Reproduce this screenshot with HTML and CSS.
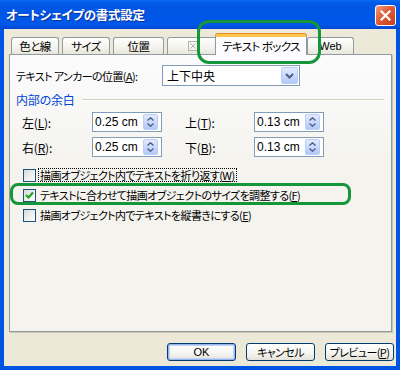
FILE: index.html
```html
<!DOCTYPE html>
<html>
<head>
  <meta charset="UTF-8">
  <link rel="stylesheet" href="styles.css">
</head>
<body>
  <div class="window">
    <div class="titlebar">
      <span class="title">オートシェイプの書式設定</span>
      <span class="close">
        <svg width="11" height="11" viewBox="0 0 11 11"><path d="M1.5 1.5 L9.5 9.5 M9.5 1.5 L1.5 9.5" stroke="#fff" stroke-width="2.2" stroke-linecap="square"/></svg>
      </span>
    </div>

    <div class="client">
      <div class="tabs">
        <div class="tab w1">色と線</div>
        <div class="tab w2">サイズ</div>
        <div class="tab w3">位置</div>
        <div class="tab w4">
          <svg width="10" height="10" viewBox="0 0 10 10"><rect x="0.5" y="0.5" width="9" height="9" fill="#f4f3ee" stroke="#b5b3a8"/><path d="M2.5 2.5 L7.5 7.5 M7.5 2.5 L2.5 7.5" stroke="#b5b3a8"/></svg>
        </div>
        <div class="tab sel">テキスト ボックス</div>
        <div class="tab w6">Web</div>
      </div>

      <div class="panel">
        <div class="anchor">
          <span class="anchor-label">テキスト アンカーの位置(<u>A</u>):</span>
          <div class="select">
            <span class="select-text">上下中央</span>
            <span class="drop">
              <svg width="9" height="6" viewBox="0 0 9 6"><path d="M1 1 L4.5 4.5 L8 1" fill="none" stroke="#4d6185" stroke-width="2"/></svg>
            </span>
          </div>
        </div>

        <div class="group">
          <span class="group-label">内部の余白</span>
          <span class="rule"></span>
        </div>

        <div class="margins">
          <div class="mrow">
            <span class="mlabel">左(<u>L</u>):</span>
            <div class="spin"><span class="val">0.25 cm</span><span class="arrows"><svg width="7" height="4" viewBox="0 0 7 4"><path d="M0.5 3.5 L3.5 0.8 L6.5 3.5" fill="none" stroke="#4d6185" stroke-width="1.4"/></svg><svg width="7" height="4" viewBox="0 0 7 4"><path d="M0.5 0.5 L3.5 3.2 L6.5 0.5" fill="none" stroke="#4d6185" stroke-width="1.4"/></svg></span></div>
            <span class="mlabel second">上(<u>T</u>):</span>
            <div class="spin"><span class="val">0.13 cm</span><span class="arrows"><svg width="7" height="4" viewBox="0 0 7 4"><path d="M0.5 3.5 L3.5 0.8 L6.5 3.5" fill="none" stroke="#4d6185" stroke-width="1.4"/></svg><svg width="7" height="4" viewBox="0 0 7 4"><path d="M0.5 0.5 L3.5 3.2 L6.5 0.5" fill="none" stroke="#4d6185" stroke-width="1.4"/></svg></span></div>
          </div>
          <div class="mrow">
            <span class="mlabel">右(<u>R</u>):</span>
            <div class="spin"><span class="val">0.25 cm</span><span class="arrows"><svg width="7" height="4" viewBox="0 0 7 4"><path d="M0.5 3.5 L3.5 0.8 L6.5 3.5" fill="none" stroke="#4d6185" stroke-width="1.4"/></svg><svg width="7" height="4" viewBox="0 0 7 4"><path d="M0.5 0.5 L3.5 3.2 L6.5 0.5" fill="none" stroke="#4d6185" stroke-width="1.4"/></svg></span></div>
            <span class="mlabel second">下(<u>B</u>):</span>
            <div class="spin"><span class="val">0.13 cm</span><span class="arrows"><svg width="7" height="4" viewBox="0 0 7 4"><path d="M0.5 3.5 L3.5 0.8 L6.5 3.5" fill="none" stroke="#4d6185" stroke-width="1.4"/></svg><svg width="7" height="4" viewBox="0 0 7 4"><path d="M0.5 0.5 L3.5 3.2 L6.5 0.5" fill="none" stroke="#4d6185" stroke-width="1.4"/></svg></span></div>
          </div>
        </div>

        <div class="checks">
          <div class="check">
            <span class="box"></span>
            <span class="ctext focus">描画オブジェクト内でテキストを折り返す(<u>W</u>)</span>
          </div>
          <div class="check">
            <span class="box"><svg width="9" height="9" viewBox="0 0 9 9"><path d="M1 4 L3.5 6.5 L8 1.5" fill="none" stroke="#21a121" stroke-width="2.2"/></svg></span>
            <span class="ctext">テキストに合わせて描画オブジェクトのサイズを調整する(<u>F</u>)</span>
          </div>
          <div class="check">
            <span class="box"></span>
            <span class="ctext">描画オブジェクト内でテキストを縦書きにする(<u>E</u>)</span>
          </div>
        </div>
      </div>

      <div class="buttons">
        <span class="btn default">OK</span>
        <span class="btn">キャンセル</span>
        <span class="btn">プレビュー(<u>P</u>)</span>
      </div>
    </div>

    <!-- green annotation marks -->
    <div class="mark mark-tab"></div>
    <div class="mark mark-check"></div>
  </div>
</body>
</html>
```

FILE: styles.css
```css
body {
  margin: 0;
}
.window {
  position: relative;
  width: 400px;
  height: 370px;
  display: flex;
  flex-direction: column;
  font-family: "Noto Sans CJK JP", sans-serif;
  font-size: 11px;
  letter-spacing: -0.6px;
  font-feature-settings: "palt";
  color: #000;
  white-space: nowrap;
}
.titlebar {
  height: 29px;
  flex: none;
  display: flex;
  align-items: center;
  padding: 0 4px 0 6px;
  background: linear-gradient(#0a6af0 0%, #0259e6 12%, #0055e4 50%, #0058ea 85%, #0046d0 100%);
}
.title {
  flex: 1;
  color: #fff;
  font-weight: bold;
  font-size: 12.5px;
  letter-spacing: -0.3px;
  text-shadow: 1px 1px #0b2f9a;
}
.close {
  width: 19px;
  height: 19px;
  margin-top: 2px;
  display: flex;
  align-items: center;
  justify-content: center;
  border: 1px solid #fff;
  border-radius: 3px;
  background: linear-gradient(135deg, #f0a088 0%, #e2603a 40%, #c83c18 100%);
}
.client {
  flex: 1;
  display: flex;
  flex-direction: column;
  background: #ece9d8;
  border: 4px solid #0055e5;
  border-top: 0;
  padding: 5px 4px 0 5px;
}
.tabs {
  height: 20px;
  display: flex;
  align-items: flex-end;
  padding-left: 2px;
  position: relative;
  z-index: 2;
}
.tab {
  box-sizing: border-box;
  height: 17px;
  margin-right: 3px;
  border: 1px solid #919b9c;
  border-bottom: 0;
  border-radius: 3px 3px 0 0;
  background: linear-gradient(#fff, #f3f2ec 60%, #e8e6dc);
  display: flex;
  align-items: center;
  justify-content: center;
  font-size: 11.5px;
}
.w1 { width: 48px; }
.w2 { width: 48px; }
.w3 { width: 51px; }
.w4 { width: 50px; margin-right: 0; justify-content: flex-start; padding-left: 20px; }
.w6 { width: 47px; font-family: "Liberation Sans", sans-serif; font-size: 11px; letter-spacing: 0; }
.sel {
  width: 92px;
  height: 21px;
  margin: 0 0 -1px -2px;
  background: #fcfcfe;
  border-top: 3px solid #fbc649;
  box-shadow: 0 -1px #e68b2c;
}
.panel {
  height: 278px;
  box-sizing: border-box;
  border: 1px solid #919b9c;
  box-shadow: 1px 1px #c8c6b8;
  background: linear-gradient(#fcfcfe, #f4f3ee 40%, #f4f3ee);
  padding: 10px 6px 0 6px;
}
.anchor {
  display: flex;
  align-items: center;
  height: 21px;
}
.anchor-label {
  width: 146px;
}
.select {
  width: 138px;
  height: 21px;
  box-sizing: border-box;
  border: 1px solid #7f9db9;
  background: #fff;
  display: flex;
  align-items: center;
  padding: 1px;
}
.select-text {
  flex: 1;
  padding-left: 3px;
  font-size: 12px;
  letter-spacing: 0;
}
.drop, .arrows {
  border: 1px solid #b9cdf6;
  border-radius: 2px;
  background: linear-gradient(#e2eafe, #c5d6fc 60%, #b4c8f6);
  box-sizing: border-box;
}
.drop {
  width: 17px;
  height: 17px;
  display: flex;
  align-items: center;
  justify-content: center;
}
.group {
  margin-top: 6px;
  height: 14px;
  display: flex;
  align-items: center;
}
.group-label {
  color: #0046d5;
  font-size: 12px;
  letter-spacing: -0.2px;
}
.rule {
  flex: 1;
  margin: 1px 1px 0 7px;
  border-top: 1px solid #d0d0bf;
  border-bottom: 1px solid #fff;
}
.margins {
  margin-top: 6px;
  padding-left: 6px;
  display: flex;
  flex-direction: column;
  gap: 5px;
}
.mrow {
  display: flex;
  align-items: center;
  height: 20px;
}
.mlabel {
  width: 70px;
  font-size: 12px;
  letter-spacing: -0.2px;
}
.mlabel.second {
  width: 69px;
  margin-left: 23px;
}
.spin {
  width: 70px;
  height: 20px;
  box-sizing: border-box;
  border: 1px solid #7f9db9;
  background: #fff;
  display: flex;
  align-items: center;
  padding: 1px;
}
.val {
  flex: 1;
  padding-left: 1px;
  font-family: "Liberation Sans", sans-serif;
  font-size: 12px;
  letter-spacing: 0;
}
.arrows {
  width: 15px;
  height: 16px;
  margin-right: 2px;
  display: flex;
  flex-direction: column;
  align-items: center;
  justify-content: center;
  gap: 2px;
}
.checks {
  margin-top: 8px;
  padding-left: 7px;
}
.check {
  height: 20px;
  display: flex;
  align-items: center;
}
.box {
  width: 13px;
  height: 13px;
  box-sizing: border-box;
  border: 1px solid #1c5180;
  background: linear-gradient(135deg, #dcdbd5, #fff);
  margin-right: 2px;
  display: flex;
  align-items: center;
  justify-content: center;
}
.ctext {
  padding: 0 1px;
  line-height: 12px;
  border: 1px solid transparent;
}
.ctext.focus {
  border: 1px dotted #000;
}
.buttons {
  margin: 11px -2px 0 0;
  display: flex;
  justify-content: flex-end;
}
.btn {
  width: 69px;
  height: 18px;
  box-sizing: border-box;
  margin-left: 10px;
  border: 1px solid #003c74;
  border-radius: 3px;
  background: linear-gradient(#fff, #f4f4f0 60%, #e3e1d8);
  display: flex;
  align-items: center;
  justify-content: center;
}
.btn.default {
  font-family: "Liberation Sans", sans-serif;
  letter-spacing: 0;
  box-shadow: inset 0 0 0 1px #99b7ee, inset 0 0 0 2px #c2d3f5;
}
.mark {
  position: absolute;
  box-sizing: border-box;
  border: 3px solid #16963a;
  z-index: 5;
}
.mark-tab {
  left: 197px;
  top: 20px;
  width: 124px;
  height: 44px;
  border-radius: 12px;
}
.mark-check {
  left: 10px;
  top: 183px;
  width: 341px;
  height: 22px;
  border-radius: 8px;
}
```
